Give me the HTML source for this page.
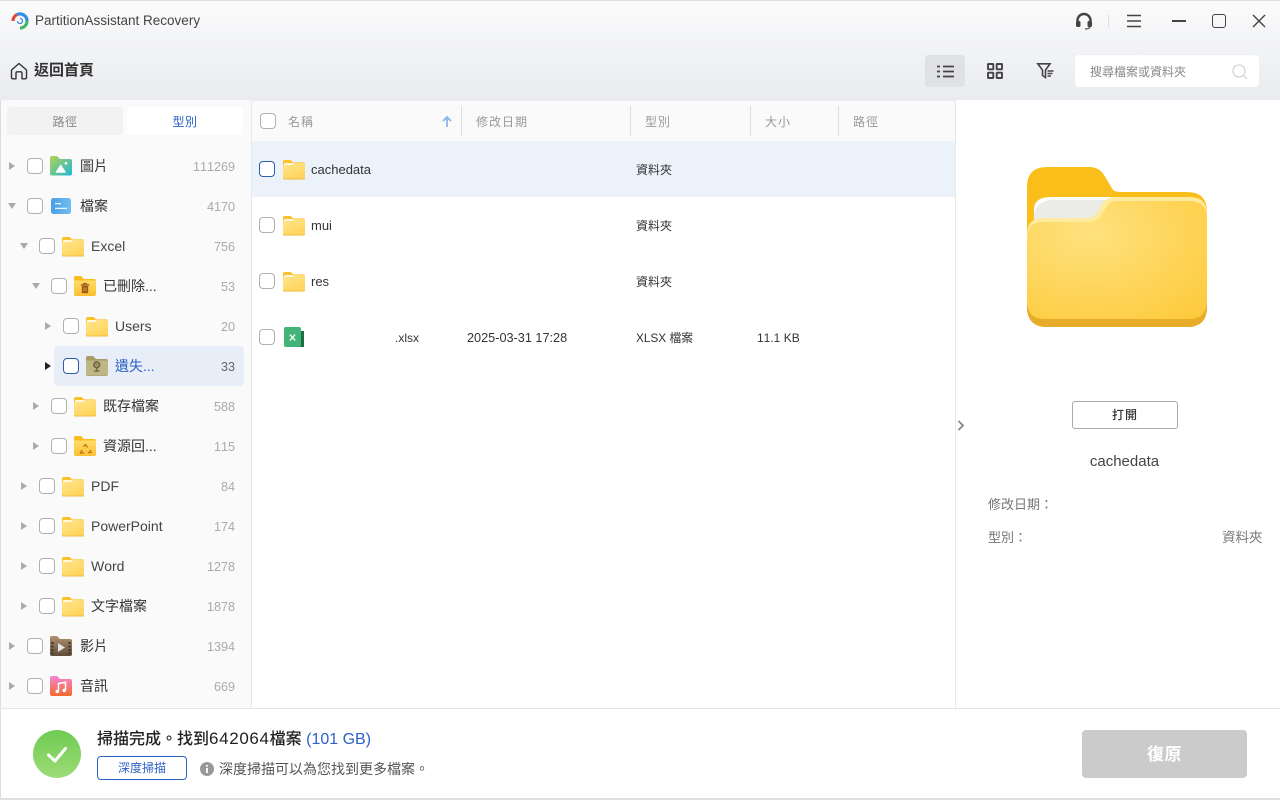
<!DOCTYPE html>
<html lang="zh-Hant"><head><meta charset="utf-8"><title>PartitionAssistant Recovery</title>
<style>
html,body{margin:0;padding:0;width:1280px;height:800px;overflow:hidden;background:#fff}
body{position:relative;font-family:"Liberation Sans","Noto Sans CJK TC",sans-serif;color:#333;font-kerning:none}
.a{position:absolute;white-space:nowrap}
.t{position:absolute;white-space:nowrap;line-height:20px;height:20px}
.cb{position:absolute;width:14px;height:14px;border:1.2px solid #b0b0b0;border-radius:4px;background:#fff}
.cb.s{border-color:#2f5ca8}
.c{position:absolute;right:1045px;width:60px;text-align:right;font-size:12.6px;line-height:20px;color:#aaa;margin-top:1px}
.n{font-size:13px;color:#333;margin-top:1px}
.m{font-size:14px;color:#333}
.h{font-size:12px;color:#999;line-height:20px;position:absolute;top:112px;letter-spacing:1px}
.d{position:absolute;top:106px;height:30px;width:1px;background:#ddd}
.ar{position:absolute;width:0;height:0}
.r{border-left:6px solid #aaa;border-top:4px solid transparent;border-bottom:4px solid transparent}
.v{border-top:6px solid #aaa;border-left:4px solid transparent;border-right:4px solid transparent}
svg{position:absolute;display:block;overflow:visible}
svg.f{margin-top:.5px}
</style></head><body>
<svg width="0" height="0" style="position:absolute"><defs>
<radialGradient id="fg" cx=".35" cy=".3" r=".9"><stop offset="0" stop-color="#ffe27f"/><stop offset="1" stop-color="#fdca3c"/></radialGradient>
<linearGradient id="fs" x1="0" y1="0" x2=".6" y2="1"><stop offset="0" stop-color="#ffe68e"/><stop offset="1" stop-color="#ffd45e"/></linearGradient>
<symbol id="big" viewBox="0 0 180 160" preserveAspectRatio="none">
<path d="M0 20Q0 0 20 0H62Q72 0 77 8L86 23Q88 25 95 25H160Q180 25 180 45V140Q180 160 160 160H20Q0 160 0 140Z" fill="#fabe1b"/>
<path d="M7 42Q7 30 24 30H90V60H7Z" fill="#ebebe8"/>
<path d="M7 44Q7 30 24 30H95V33H26Q10 33 7 48Z" fill="#fff"/>
<path d="M0 68Q0 51 16 51H60Q67 51 70 46L76 36Q80 30 90 30H162Q180 30 180 47V140Q180 152 162 152H18Q0 152 0 140Z" fill="url(#fg)"/>
<path d="M0 68Q0 51 16 51H60Q67 51 70 46L76 36Q80 30 90 30H162Q180 30 180 47V51Q180 34 162 34H90Q83 34 80 39L74 49Q70 55 60 55H16Q0 55 0 72Z" fill="#ffeb9f"/>
<path d="M0 134V140Q0 160 20 160H160Q180 160 180 140V134Q180 152 162 152H18Q0 152 0 134Z" fill="#e7ac2a"/>
</symbol>
<symbol id="folder" viewBox="0 0 22 19.500" preserveAspectRatio="none">
<path d="M0 2Q0 0 2 0H7Q8 0 8.600 .8L9.800 2.400H20Q22 2.400 22 4.400V18Q22 19.500 20 19.500H2Q0 19.500 0 18Z" fill="#fcc02a"/>
<rect x="1" y="3" width="10" height="3" rx="1" fill="#fff7dc"/>
<path d="M0 6Q0 5 1 5H8.500Q9.500 5 10 4.200L10.400 3.600Q10.800 3 11.500 3H20Q22 3 22 5V17.500Q22 18.700 20 18.700H2Q0 18.700 0 17.500Z" fill="url(#fs)"/>
<path d="M0 17V18Q0 19.500 2 19.500H20Q22 19.500 22 18V17Q22 18.600 20 18.600H2Q0 18.600 0 17Z" fill="#eeb93a"/>
</symbol>
<linearGradient id="pic" x1="0" y1="0" x2="1" y2="1"><stop offset="0" stop-color="#b5d24f"/><stop offset="1" stop-color="#1fb8d8"/></linearGradient>
<linearGradient id="mus" x1="0" y1="0" x2="0" y2="1"><stop offset="0" stop-color="#f586d2"/><stop offset="1" stop-color="#f26a2e"/></linearGradient>
<linearGradient id="vid" x1="0" y1="0" x2="0" y2="1"><stop offset="0" stop-color="#b0926e"/><stop offset="1" stop-color="#5d4c3c"/></linearGradient>
<linearGradient id="ok" x1="0" y1="0" x2="0" y2="1"><stop offset="0" stop-color="#6fcb52"/><stop offset="1" stop-color="#9cdc76"/></linearGradient>
<linearGradient id="doc" x1="0" y1="0" x2="1" y2="0"><stop offset="0" stop-color="#4a9fe8"/><stop offset="1" stop-color="#72bdf0"/></linearGradient>
<linearGradient id="spec" x1="0" y1="0" x2="0" y2="1"><stop offset="0" stop-color="#ffdc6a"/><stop offset="1" stop-color="#fcc132"/></linearGradient>
</defs></svg>

<!-- header -->
<div class="a" style="left:0;top:0;width:1280px;height:100px;background:linear-gradient(#fbfbfb,#e9ebef)"></div>
<div class="a" style="left:0;top:0;width:1280px;height:1px;background:#ddd"></div>
<svg style="left:11px;top:12px" width="18" height="18" viewBox="0 0 18 18" fill="none" stroke-width="3.200">
<path d="M2 9A7 7 0 0 1 6 2.600" stroke="#e8443d"/><path d="M6 2.600A7 7 0 0 1 16 9" stroke="#2f8ee6"/><path d="M16 9A7 7 0 0 1 9 16" stroke="#45b56a"/>
<path d="M6.500 9A2.500 2.500 0 1 0 9 6.500" stroke="#3f87d8" stroke-width="1.300"/></svg>
<div class="t" style="left:35px;top:11px;font-size:13.5px;color:#444;">PartitionAssistant Recovery</div>
<svg style="left:10px;top:62px" width="18" height="18" viewBox="0 0 18 18" fill="none" stroke="#333" stroke-width="1.400" stroke-linejoin="round"><path d="M1.500 8L9 1.500L16.500 8V15.500Q16.500 16.800 15 16.800H12V11Q12 9.800 10.800 9.800H7.200Q6 9.800 6 11V16.800H3Q1.500 16.800 1.500 15.500Z"/></svg>
<div class="t" style="left:34px;top:61px;font-size:15px;font-weight:700;color:#333">返回首頁</div>

<svg style="left:1075px;top:12px" width="18" height="18" viewBox="0 0 18 18" fill="none"><path d="M2.500 11V8.500A6.500 6.500 0 0 1 15.500 8.500V11" stroke="#444" stroke-width="2.400"/><rect x="1" y="9" width="4.500" height="6" rx="1.500" fill="#444"/><rect x="12.500" y="9" width="4.500" height="6" rx="1.500" fill="#444"/><path d="M15 15Q14 17 10 17" stroke="#444" stroke-width="1.200"/></svg>
<div class="a" style="left:1108px;top:15px;width:1px;height:12px;background:#ddd"></div>
<svg style="left:1126px;top:14px" width="16" height="14" stroke="#444" stroke-width="1.400"><path d="M1 1.500H15M1 7H15M1 12.500H15"/></svg>
<div class="a" style="left:1172px;top:20px;width:14px;height:1.500px;background:#444"></div>
<div class="a" style="left:1212px;top:14px;width:11.500px;height:11.500px;border:1.500px solid #444;border-radius:3px"></div>
<svg style="left:1252px;top:14px" width="14" height="14" stroke="#444" stroke-width="1.400"><path d="M1 1L13 13M13 1L1 13"/></svg>

<div class="a" style="left:925px;top:55px;width:40px;height:32px;background:#e0e1e4;border-radius:4px"></div>
<svg style="left:937px;top:65px" width="17" height="13" stroke="#444" stroke-width="1.800"><path d="M0 1.500H3M6 1.500H17M0 6.500H3M6 6.500H17M0 11.500H3M6 11.500H17"/></svg>
<svg style="left:987px;top:63px" width="16" height="16" fill="none" stroke="#444" stroke-width="1.900"><rect x="1" y="1" width="5.300" height="5.300" rx=".6"/><rect x="9.700" y="1" width="5.300" height="5.300" rx=".6"/><rect x="1" y="9.700" width="5.300" height="5.300" rx=".6"/><rect x="9.700" y="9.700" width="5.300" height="5.300" rx=".6"/></svg>
<svg style="left:1037px;top:63px" width="17" height="16" fill="none" stroke="#444" stroke-width="1.600"><path d="M.8 .8H13L8.500 7V14.500L5.500 12.500V7Z"/><path d="M10.500 8H16.500M10.500 10.500H15.500M10.500 13H14"/></svg>
<div class="a" style="left:1075px;top:55px;width:184px;height:32px;background:#fff;border-radius:4px"></div>
<div class="t" style="left:1090px;top:62px;font-size:12px;color:#888">搜尋檔案或資料夾</div>
<svg style="left:1232px;top:64px" width="16" height="16" fill="none" stroke="#d6d6d6" stroke-width="1.300"><circle cx="7" cy="7" r="6"/><path d="M11.500 11.500L15 15"/></svg>

<!-- sidebar -->
<div class="a" style="left:0;top:100px;width:251px;height:608px;background:#fafafa"></div>
<div class="a" style="left:0;top:100px;width:1px;height:700px;background:#ddd"></div>
<div class="a" style="left:251px;top:100px;width:1px;height:608px;background:#e8e9ec"></div>
<div class="a" style="left:7px;top:107px;width:116px;height:28px;background:#f2f2f2;border-radius:4px"></div>
<div class="a" style="left:127px;top:107px;width:116px;height:28px;background:#fff;border-radius:4px"></div>
<div class="t" style="left:7px;width:116px;text-align:center;top:112px;font-size:12px;color:#888;letter-spacing:.5px">路徑</div>
<div class="t" style="left:127px;width:116px;text-align:center;top:112px;font-size:12px;color:#2d62c4;letter-spacing:.5px">型別</div>

<div class="a" style="left:54px;top:346px;width:190px;height:40px;background:#e8eef7;border-radius:4px"></div>

<!-- level 0 -->
<div class="ar r" style="left:9px;top:162px"></div><div class="cb" style="left:27px;top:158px"></div>
<svg style="left:50px;top:156px" width="22" height="20" viewBox="0 0 22 20"><path d="M0 2Q0 0 2 0H6Q7 0 8 1L10 3H20Q22 3 22 5V17.500Q22 19.500 20 19.500H2Q0 19.500 0 17.500Z" fill="url(#pic)"/><path d="M6.200 16.200L10.700 9.200L15.200 16.200Z" fill="#fff" stroke="#fff" stroke-linejoin="round"/><circle cx="16" cy="7.300" r="1.300" fill="#fff"/></svg>
<div class="t m" style="left:80px;top:156px">圖片</div><div class="c" style="top:156px">111269</div>

<div class="ar v" style="left:8px;top:203px"></div><div class="cb" style="left:27px;top:198px"></div>
<svg style="left:51px;top:198px" width="20" height="16" viewBox="0 0 20 16"><rect width="20" height="16" rx="2.500" fill="url(#doc)"/><path d="M4 5.700H10M4 10.300H16" stroke="#fff" stroke-width="1.200"/></svg>
<div class="t m" style="left:80px;top:196px">檔案</div><div class="c" style="top:196px">4170</div>

<div class="ar r" style="left:9px;top:642px"></div><div class="cb" style="left:27px;top:638px"></div>
<svg style="left:50px;top:636px" width="22" height="20" viewBox="0 0 22 20"><path d="M0 2Q0 0 2 0H7L10 3H20Q22 3 22 5V18Q22 20 20 20H2Q0 20 0 18Z" fill="url(#vid)"/><path d="M8 7L15 11.500L8 16Z" fill="#e3e3e3"/><path d="M2.500 6V18M19.500 6V18" stroke="#3a3028" stroke-width="2" stroke-dasharray="2 1.500"/></svg>
<div class="t m" style="left:80px;top:636px">影片</div><div class="c" style="top:636px">1394</div>

<div class="ar r" style="left:9px;top:682px"></div><div class="cb" style="left:27px;top:678px"></div>
<svg style="left:50px;top:676px" width="22" height="20" viewBox="0 0 22 20"><path d="M0 2Q0 0 2 0H7L10 3H20Q22 3 22 5V18Q22 20 20 20H2Q0 20 0 18Z" fill="url(#mus)"/><path d="M8.500 15.500V7.500L15.500 6.300V14.500" fill="none" stroke="#fff" stroke-width="1.500"/><circle cx="7.200" cy="15.500" r="1.700" fill="#fff"/><circle cx="14.200" cy="14.500" r="1.700" fill="#fff"/></svg>
<div class="t m" style="left:80px;top:676px">音訊</div><div class="c" style="top:676px">669</div>

<!-- level 1 -->
<div class="ar v" style="left:20px;top:243px"></div><div class="cb" style="left:39px;top:238px"></div>
<svg class="f" style="left:62px;top:236px" width="22" height="19.500"><use href="#folder" width="22" height="19.500"/></svg>
<div class="t" style="left:91px;top:236px;font-size:14px;color:#444">Excel</div><div class="c" style="top:236px">756</div>

<div class="ar r" style="left:21px;top:482px"></div><div class="cb" style="left:39px;top:478px"></div>
<svg class="f" style="left:62px;top:476px" width="22" height="19.500"><use href="#folder" width="22" height="19.500"/></svg>
<div class="t" style="left:91px;top:476px;font-size:14px;color:#444">PDF</div><div class="c" style="top:476px">84</div>

<div class="ar r" style="left:21px;top:522px"></div><div class="cb" style="left:39px;top:518px"></div>
<svg class="f" style="left:62px;top:516px" width="22" height="19.500"><use href="#folder" width="22" height="19.500"/></svg>
<div class="t" style="left:91px;top:516px;font-size:14px;color:#444">PowerPoint</div><div class="c" style="top:516px">174</div>

<div class="ar r" style="left:21px;top:562px"></div><div class="cb" style="left:39px;top:558px"></div>
<svg class="f" style="left:62px;top:556px" width="22" height="19.500"><use href="#folder" width="22" height="19.500"/></svg>
<div class="t" style="left:91px;top:556px;font-size:14px;color:#444">Word</div><div class="c" style="top:556px">1278</div>

<div class="ar r" style="left:21px;top:602px"></div><div class="cb" style="left:39px;top:598px"></div>
<svg class="f" style="left:62px;top:596px" width="22" height="19.500"><use href="#folder" width="22" height="19.500"/></svg>
<div class="t m" style="left:91px;top:596px">文字檔案</div><div class="c" style="top:596px">1878</div>

<!-- level 2 -->
<div class="ar v" style="left:32px;top:283px"></div><div class="cb" style="left:51px;top:278px"></div>
<svg style="left:74px;top:276px" width="22" height="20" viewBox="0 0 22 20"><path d="M0 2Q0 0 2 0H7L10 3H20Q22 3 22 5V18Q22 20 20 20H2Q0 20 0 18Z" fill="#fbbd1b"/><path d="M0 4.500H22V18Q22 19.500 20 19.500H2Q0 19.500 0 18Z" fill="url(#spec)"/><path d="M6.800 9H15.200" stroke="#a0561c" stroke-width="1.400"/><path d="M9 7.500H13" stroke="#a0561c" stroke-width="1.200"/><path d="M7.800 10H14.200V16Q14.200 17.300 13 17.300H9Q7.800 17.300 7.800 16Z" fill="#a0561c"/><path d="M10 11.500V15.500M12 11.500V15.500" stroke="#fcc132" stroke-width=".7"/></svg>
<div class="t m" style="left:103px;top:276px">已刪除...</div><div class="c" style="top:276px">53</div>

<div class="ar r" style="left:33px;top:402px"></div><div class="cb" style="left:51px;top:398px"></div>
<svg class="f" style="left:74px;top:396px" width="22" height="19.500"><use href="#folder" width="22" height="19.500"/></svg>
<div class="t m" style="left:103px;top:396px">既存檔案</div><div class="c" style="top:396px">588</div>

<div class="ar r" style="left:33px;top:442px"></div><div class="cb" style="left:51px;top:438px"></div>
<svg style="left:74px;top:436px" width="22" height="20" viewBox="0 0 22 20"><path d="M0 2Q0 0 2 0H7L10 3H20Q22 3 22 5V18Q22 20 20 20H2Q0 20 0 18Z" fill="#fbbd1b"/><path d="M0 4.500H22V18Q22 19.500 20 19.500H2Q0 19.500 0 18Z" fill="url(#spec)"/><path d="M9.500 9.500L11.500 7.500L13.500 10.500M16 13L17 15.500H14M10 16H6.500L8 13" fill="none" stroke="#c06a22" stroke-width="1.300" transform="translate(0 1)"/></svg>
<div class="t m" style="left:103px;top:436px">資源回...</div><div class="c" style="top:436px">115</div>

<!-- level 3 -->
<div class="ar r" style="left:45px;top:322px"></div><div class="cb" style="left:63px;top:318px"></div>
<svg class="f" style="left:86px;top:316px" width="22" height="19.500"><use href="#folder" width="22" height="19.500"/></svg>
<div class="t" style="left:115px;top:316px;font-size:14px;color:#444">Users</div><div class="c" style="top:316px">20</div>

<div class="ar r" style="left:45px;top:362px;border-left-color:#222"></div><div class="cb s" style="left:63px;top:358px"></div>
<svg style="left:86px;top:356px" width="22" height="20" viewBox="0 0 22 20"><path d="M0 2Q0 0 2 0H7L10 3H20Q22 3 22 5V18Q22 20 20 20H2Q0 20 0 18Z" fill="#a89a62"/><path d="M0 4.500H22V18Q22 19.500 20 19.500H2Q0 19.500 0 18Z" fill="#bcb784"/><circle cx="10.700" cy="8.800" r="3" fill="#a08e66" stroke="#6e5d45" stroke-width="1.300"/><path d="M10.700 12V14.500M8 15H13.500" stroke="#6e5d45" stroke-width="1.300"/></svg>
<div class="t m" style="left:115px;top:356px;color:#2d62c4">遺失...</div><div class="c" style="top:356px;color:#666">33</div>

<!-- list -->
<div class="a" style="left:252px;top:100px;width:703px;height:41px;background:#fafafa"></div>
<div class="a" style="left:252px;top:100px;width:703px;height:1px;background:#eceef1"></div>
<div class="a" style="left:252px;top:141px;width:703px;height:56px;background:#ebf2fa"></div>
<div class="cb" style="left:260px;top:113px"></div>
<div class="h" style="left:288px">名稱</div>
<svg style="left:442px;top:116px" width="10" height="11" fill="none" stroke="#8ab6ea" stroke-width="1.800"><path d="M1 5L5 1L9 5M5 1V11"/></svg>
<div class="d" style="left:461px"></div><div class="h" style="left:476px">修改日期</div>
<div class="d" style="left:630px"></div><div class="h" style="left:645px">型別</div>
<div class="d" style="left:750px"></div><div class="h" style="left:765px">大小</div>
<div class="d" style="left:838px"></div><div class="h" style="left:853px">路徑</div>

<div class="cb s" style="left:259px;top:161px"></div>
<svg class="f" style="left:283px;top:159px" width="22" height="19.500"><use href="#folder" width="22" height="19.500"/></svg>
<div class="t n" style="left:311px;top:159px">cachedata</div><div class="t" style="left:636px;top:160px;font-size:12px;color:#333">資料夾</div>

<div class="cb" style="left:259px;top:217px"></div>
<svg class="f" style="left:283px;top:215px" width="22" height="19.500"><use href="#folder" width="22" height="19.500"/></svg>
<div class="t n" style="left:311px;top:215px">mui</div><div class="t" style="left:636px;top:216px;font-size:12px;color:#333">資料夾</div>

<div class="cb" style="left:259px;top:273px"></div>
<svg class="f" style="left:283px;top:271px" width="22" height="19.500"><use href="#folder" width="22" height="19.500"/></svg>
<div class="t n" style="left:311px;top:271px">res</div><div class="t" style="left:636px;top:272px;font-size:12px;color:#333">資料夾</div>

<div class="cb" style="left:259px;top:329px"></div>
<svg style="left:284px;top:327px" width="20" height="20" viewBox="0 0 20 20"><rect x="14" y="4" width="6" height="16" fill="#1f6e43"/><rect width="17" height="20" rx="2" fill="#43b477"/><path d="M5.800 7.500L11.200 13.500M11.200 7.500L5.800 13.500" stroke="#e8f6ee" stroke-width="1.500"/></svg>
<div class="t" style="left:395px;top:328px;font-size:12px;color:#333">.xlsx</div>
<div class="t" style="left:467px;top:328px;font-size:12.700px;color:#333">2025-03-31 17:28</div>
<div class="t" style="left:636px;top:328px;font-size:11.800px;color:#333">XLSX 檔案</div>
<div class="t" style="left:757px;top:328px;font-size:12px;color:#333">11.1 KB</div>

<!-- right panel -->
<div class="a" style="left:955px;top:100px;width:1px;height:608px;background:#e8e9ec"></div>
<svg style="left:957px;top:420px" width="8" height="11" fill="none" stroke="#888" stroke-width="1.800"><path d="M1.500 1L6 5.500L1.500 10"/></svg>
<svg style="left:1027px;top:167px" width="180" height="160"><use href="#big" width="180" height="160"/></svg>
<div class="a" style="left:1072px;top:401px;width:104px;height:26px;border:1px solid #aaa;border-radius:3px;background:#fff;text-align:center;font-size:12px;line-height:26px;color:#333;letter-spacing:1px;font-weight:500">打開</div>
<div class="a" style="left:956px;width:337px;text-align:center;top:452px;font-size:15px;line-height:20px;color:#444">cachedata</div>
<div class="t" style="left:988px;top:495px;font-size:13px;color:#777">修改日期：</div>
<div class="t" style="left:988px;top:528px;font-size:13px;color:#777">型別：</div>
<div class="t" style="left:1222px;top:528px;font-size:13.500px;color:#777">資料夾</div>

<!-- footer -->
<div class="a" style="left:0;top:708px;width:1280px;height:1px;background:#e5e5e5"></div>
<div class="a" style="left:0;top:798px;width:1280px;height:2px;background:#e0e0e0"></div>
<svg style="left:33px;top:730px" width="48" height="48" viewBox="0 0 48 48"><circle cx="24" cy="24" r="24" fill="url(#ok)"/><path d="M15.500 25L22 31L32.500 18.500" fill="none" stroke="#fff" stroke-width="3" stroke-linecap="round" stroke-linejoin="round"/></svg>
<div class="t" style="left:97px;top:729px;font-size:16px;color:#222;font-weight:500">掃描完成。找到<span style="font-size:17px;letter-spacing:.65px">642064</span>檔案 <span style="color:#2d62c4">(101 GB)</span></div>
<div class="a" style="left:97px;top:756px;width:88px;height:22px;border:1px solid #2d62c4;border-radius:4px;text-align:center;font-size:12px;line-height:22px;color:#2d62c4">深度掃描</div>
<svg style="left:200px;top:761.500px" width="14" height="14" viewBox="0 0 14 14"><circle cx="7" cy="7" r="7" fill="#999"/><path d="M7 3V4.800M7 6V11" stroke="#fff" stroke-width="1.800"/></svg>
<div class="t" style="left:219px;top:759px;font-size:14px;color:#555">深度掃描可以為您找到更多檔案。</div>
<div class="a" style="left:1082px;top:730px;width:165px;height:48px;background:#cbcbcb;border-radius:4px;text-align:center;font-size:17px;font-weight:700;line-height:49px;color:#fff;letter-spacing:.5px">復原</div>
</body></html>
